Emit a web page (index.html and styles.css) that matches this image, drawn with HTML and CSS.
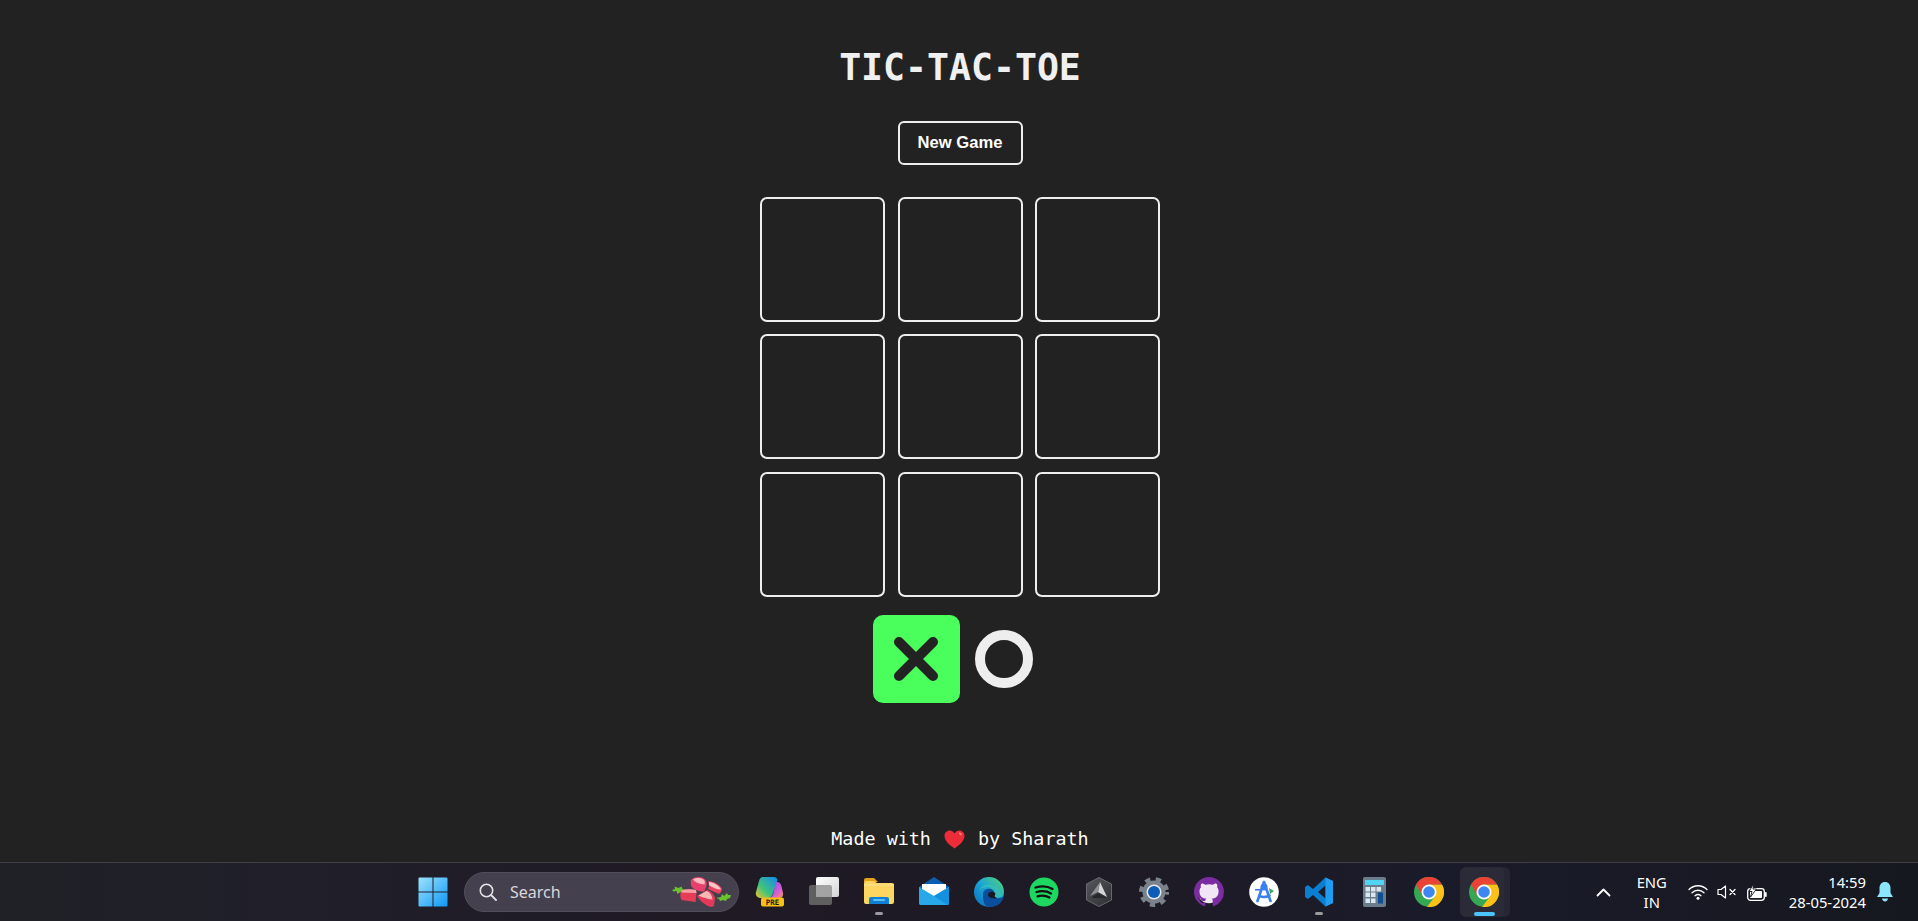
FILE: index.html
```html
<!DOCTYPE html>
<html lang="en">
<head>
<meta charset="utf-8">
<title>Tic-Tac-Toe</title>
<link rel="stylesheet" href="styles.css">
</head>
<body>
<main class="game">
  <h1 class="title">TIC-TAC-TOE</h1>
  <button class="new-game">New Game</button>
  <div class="board">
    <div class="cell"></div><div class="cell"></div><div class="cell"></div>
    <div class="cell"></div><div class="cell"></div><div class="cell"></div>
    <div class="cell"></div><div class="cell"></div><div class="cell"></div>
  </div>
  <div class="turns">
    <div class="turn turn-active">
      <svg class="mark" viewBox="0 0 44 44"><path d="M5 5 39 39M39 5 5 39" fill="none" stroke="#222" stroke-width="10" stroke-linecap="round"/></svg>
    </div>
    <div class="turn"><div class="ring"></div></div>
  </div>
  <footer class="credit">
    <span>Made with</span>
    <svg class="heart" viewBox="0 0 21 19"><path d="M10.500 18.500C4 14 .5 10.200.5 6 .5 2.800 2.900.5 5.700.5 7.700.5 9.500 1.600 10.500 3.400 11.500 1.600 13.300.5 15.300.5c2.800 0 5.200 2.300 5.200 5.500 0 4.200-3.500 8-10 12.500Z" fill="#ee2b38"/><path d="M15 2.500c1.600.1 2.800 1.200 3 2.800-1.600.2-3-1-3-2.800z" fill="#ff8a90"/></svg>
    <span>by Sharath</span>
  </footer>
</main>

<div class="taskbar">
  <div></div>
  <div class="apps">
    <div class="app">
      <svg class="icon" viewBox="0 0 30 30"><defs><linearGradient id="win" x1="0" y1="0" x2="1" y2="1"><stop offset="0" stop-color="#9be3fd"/><stop offset="1" stop-color="#0f97f5"/></linearGradient></defs><path d="M.5 1.500a1 1 0 0 1 1-1h13v14H.5zM15.500.5h13a1 1 0 0 1 1 1v13h-14zM.5 15.500h14v14h-13a1 1 0 0 1-1-1zM15.500 15.500h14v13a1 1 0 0 1-1 1h-13z" fill="url(#win)"/></svg>
    </div>
    <div class="search">
      <svg class="search-icon" viewBox="0 0 18 18"><circle cx="7.500" cy="7.500" r="6.200" fill="none" stroke="#e4e2e6" stroke-width="1.600"/><path d="M12 12l5 5" stroke="#e4e2e6" stroke-width="1.800" stroke-linecap="round"/></svg>
      <span class="search-text">Search</span>
      <svg class="rhubarb" viewBox="0 0 60 30">
        <path d="M0 13l3-1-.5-2.500 4 1.500 3-1.500 1 2.500 5 1-1 3-6-1-3 2-1-3-3 .5z" fill="#6cc22c"/>
        <path d="M44 21l5-1 1-3 2 2 3-3 1 2 3 0-1 3-3 1-1 2-3-1-3 1-1-2z" fill="#6cc22c"/>
        <path d="M19 3c3-3.500 10-4 14-.5 2 2 2 5 1 8l-2 4c-5 0-11-2-13-6-.5-2 0-4 0-5.500z" fill="#e7406d"/>
        <path d="M21 2.500c3-2 8-2 11 .5 1 1 1 3 .5 4.500C28 7 23 5.500 21 2.500z" fill="#fbb9c0"/>
        <path d="M36 4c6 0 12 4 14 8l-1 3-2 2-11-5c1.500-2 1-5 0-8z" fill="#ea4463"/>
        <path d="M37 5c5 .5 10 3.500 12 7.500-4 0-9-2-12-4.500z" fill="#fcc6c4"/>
        <path d="M9 14c5-2 10-2 15-1l.5 3-1 9-14-2c-1.500-3-1.500-6-.5-9z" fill="#e63c58"/>
        <path d="M9.500 13.500c5-1.500 10-1.500 14.500-.5l.5 3-15.200-.5z" fill="#f8a2a8"/>
        <path d="M25 19l10-6c4 1 7 4 8 8l-1 8-3 1c-6-2-11-6-14-11z" fill="#e33a5c"/>
        <path d="M26.500 18.500l8-4.500c3 1 5.500 4 6 8.500-5-.5-10-2-14-4z" fill="#fbb9b6"/>
      </svg>
    </div>
    <div class="app">
      <svg class="icon" viewBox="0 0 30 30"><defs><linearGradient id="cop1" x1="0" y1="1" x2="1" y2="0"><stop offset="0" stop-color="#f2c12e"/><stop offset=".4" stop-color="#3cc47c"/><stop offset="1" stop-color="#1688f2"/></linearGradient><linearGradient id="cop2" x1="0" y1="0" x2="1" y2="1"><stop offset="0" stop-color="#6a56f2"/><stop offset=".6" stop-color="#d65ad8"/><stop offset="1" stop-color="#f29a5a"/></linearGradient></defs>
        <path d="M9 0h11c2 0 3 1 3.500 3L19 16c-1 3-2 5-5 5H6c-3 0-5-3-4-6L5 4c.7-2.500 2-4 4-4z" fill="url(#cop1)"/>
        <path d="M22 5c4 0 5 2 5.500 4.500L29 16c.6 3-1 5-4 5H15c2 0 3.500-2 4.200-4.500z" fill="url(#cop2)"/>
        <rect x="7" y="20.500" width="23" height="9" rx="2" fill="#f8bf18"/>
        <text x="18.500" y="28" class="pre">PRE</text>
      </svg>
    </div>
    <div class="app">
      <svg class="icon" viewBox="0 0 30 30"><defs><linearGradient id="tv" x1="0" y1="0" x2="1" y2="1"><stop offset="0" stop-color="#fff"/><stop offset="1" stop-color="#d4d4d4"/></linearGradient></defs><rect x="0" y="8" width="23" height="20" rx="2" fill="#5f5f5f"/><rect x="7" y="0" width="23" height="20" rx="2" fill="url(#tv)"/><path d="M7 8h14a2 2 0 0 1 2 2v10H9a2 2 0 0 1-2-2z" fill="#a2a2a2"/></svg>
    </div>
    <div class="app">
      <svg class="icon" viewBox="0 0 30 30"><path d="M0 3a2 2 0 0 1 2-2h8l4 4H0z" fill="#e3a21a"/><path d="M0 25V6a2 2 0 0 1 2-2h8l3 2h15a2 2 0 0 1 2 2v17a2 2 0 0 1-2 2H2a2 2 0 0 1-2-2z" fill="#fcd660"/><path d="M0 7h30v2H0z" fill="#fbdd7c"/><path d="M5 22a2 2 0 0 1 2-2h16a2 2 0 0 1 2 2v5H5z" fill="#0f80d6"/><rect x="9" y="22" width="12" height="2" rx="1" fill="#5cc0f5"/></svg>
      <span class="dot"></span>
    </div>
    <div class="app">
      <svg class="icon" viewBox="0 0 30 30"><path d="M0 10 15 0l15 10v16a2 2 0 0 1-2 2H2a2 2 0 0 1-2-2z" fill="#0c5fb0"/><path d="M3 7h24v6L15 20 3 13z" fill="#fff"/><path d="M0 10l15 9 15-9v16a2 2 0 0 1-2 2H2a2 2 0 0 1-2-2z" fill="#28a8ea"/><path d="M15 19l15-9v16a2 2 0 0 1-2 2z" fill="#1490df"/></svg>
    </div>
    <div class="app">
      <svg class="icon" viewBox="0 0 30 30"><defs><linearGradient id="edge" x1="0" y1="1" x2="1" y2="0"><stop offset="0" stop-color="#0a6cbc"/><stop offset=".5" stop-color="#19a5d8"/><stop offset="1" stop-color="#58d66c"/></linearGradient></defs><circle cx="15" cy="15" r="15" fill="url(#edge)"/><path d="M5 16C5 9 12 6 18 8c5 1 9 5 9 10 0 2-3 3-6 2-2-1-2-3-1-5 0-3-3-5-6-5-4 0-9 2-9 6z" fill="#37c3b0" opacity=".7"/><path d="M9 17c0-4 4-6 8-5 3 1 4 3 3 6-1 2 1 4 5 3 2 0 4-1 5-3-1 7-6 12-14 12C9 30 9 22 9 17z" fill="#0b4f9c"/><path d="M14 18c0-3 3-4 5-3 2 0 3 2 2 3-1 2 1 3 3 3-4 1-10 0-10-3z" fill="#1c1820"/></svg>
    </div>
    <div class="app">
      <svg class="icon" viewBox="0 0 30 30"><circle cx="15" cy="15" r="14.500" fill="#1ed760"/><path d="M6.500 10.500c6-1.800 12.500-1.200 17 1.500M7.500 15c5-1.400 10.500-.9 14.500 1.400M8.500 19.300c4-1 8.500-.7 12 1.200" fill="none" stroke="#111" stroke-width="2.300" stroke-linecap="round"/></svg>
    </div>
    <div class="app">
      <svg class="icon" viewBox="0 0 30 30"><defs><linearGradient id="hexa" x1="0" y1="0" x2="1" y2="1"><stop offset="0" stop-color="#55585c"/><stop offset="1" stop-color="#2b2d31"/></linearGradient></defs><path d="M15 .5l12.500 6.500v16L15 29.500 2.500 23V7z" fill="url(#hexa)" stroke="#77797d" stroke-width=".8"/><path d="M16 5l7 15-9-5z" fill="#d3d5d7"/><path d="M16 5 6 19l8-4z" fill="#8e9094"/><path d="M7 21l7-5 9 5z" fill="#26272b"/></svg>
    </div>
    <div class="app">
      <svg class="icon" viewBox="0 0 30 30"><circle cx="15" cy="15" r="11.500" fill="#7a838b"/><circle cx="15" cy="15" r="13" fill="none" stroke="#7a838b" stroke-width="4" stroke-dasharray="5.400 5.490" stroke-dashoffset="2.700"/><circle cx="15" cy="15" r="7.500" fill="#e6eaee"/><circle cx="15" cy="15" r="6" fill="#0f5cb8"/></svg>
    </div>
    <div class="app">
      <svg class="icon" viewBox="0 0 16 16"><circle cx="8" cy="8" r="6" fill="#f1e6f6"/><path fill-rule="evenodd" d="M8 0C3.580 0 0 3.580 0 8c0 3.540 2.290 6.530 5.470 7.590.4.070.55-.17.55-.38 0-.19-.01-.82-.01-1.490-2.010.37-2.530-.49-2.690-.94-.09-.23-.48-.94-.82-1.130-.28-.15-.68-.52-.01-.53.63-.01 1.080.58 1.230.82.72 1.210 1.870.87 2.330.66.070-.52.28-.87.51-1.070-1.780-.2-3.640-.89-3.640-3.950 0-.87.31-1.590.82-2.150-.08-.2-.36-1.020.08-2.120 0 0 .67-.21 2.200.82.64-.18 1.320-.27 2-.27.68 0 1.360.09 2 .27 1.530-1.040 2.200-.82 2.200-.82.44 1.100.16 1.920.08 2.120.51.56.82 1.270.82 2.150 0 3.070-1.870 3.750-3.650 3.950.29.25.54.73.54 1.480 0 1.070-.01 1.930-.01 2.200 0 .21.15.46.55.38A8.013 8.013 0 0 0 16 8c0-4.420-3.580-8-8-8z" fill="#7a2ca0"/></svg>
    </div>
    <div class="app">
      <svg class="icon" viewBox="0 0 30 30"><circle cx="15" cy="15" r="14.800" fill="#fff"/><path d="M15 5l-6.500 19M15 5l6.500 19M10 19c4 1.500 7 1.500 10.500-.5" fill="none" stroke="#3a7ef0" stroke-width="2.600" stroke-linecap="round"/><circle cx="15" cy="10" r="3.500" fill="#3a7ef0"/><rect x="6" y="12" width="5" height="1.600" fill="#3a7ef0"/><path d="M20 11l5 3-4 3z" fill="#3aa95a"/></svg>
    </div>
    <div class="app">
      <svg class="icon" viewBox="0 0 30 30"><path fill-rule="evenodd" d="M21.500.5 29 4v22l-7.500 3.500L9 18l-5 4-3-2v-10l3-2 5 4zM21.500 8.500 14 15l7.500 6.500z" fill="#0a7fd0"/><path fill-rule="evenodd" d="M21.500.5 29 4v22l-7.500 3.500z" fill="#1e9cf0"/></svg>
      <span class="dot"></span>
    </div>
    <div class="app">
      <svg class="icon calc" viewBox="0 0 23 30"><rect width="23" height="30" rx="2" fill="#6b7d8c"/><rect x="2" y="3" width="19" height="5" fill="#4fd4f4"/><rect x="2.500" y="10" width="4.500" height="4.500" fill="#dce6ee"/><rect x="8" y="10" width="4.500" height="4.500" fill="#dce6ee"/><rect x="13.500" y="10" width="4.500" height="4.500" fill="#dce6ee"/><rect x="2.500" y="15.500" width="4.500" height="4.500" fill="#dce6ee"/><rect x="8" y="15.500" width="4.500" height="4.500" fill="#dce6ee"/><rect x="2.500" y="21.500" width="4.500" height="4.500" fill="#dce6ee"/><rect x="8" y="21.500" width="4.500" height="4.500" fill="#dce6ee"/><rect x="15" y="15.500" width="5" height="11" fill="#0f4f94"/></svg>
    </div>
    <div class="app">
      <svg class="icon" viewBox="0 0 30 30"><circle cx="15" cy="15" r="15" fill="#34a853"/><path d="M28 7.500A15 15 0 0 1 13 29.900L21.500 18.750 15 7.500z" fill="#fbc116"/><path d="M2 7.500A15 15 0 0 1 28 7.500H15L8.500 18.750z" fill="#ea4335"/><circle cx="15" cy="15" r="7.500" fill="#fff"/><circle cx="15" cy="15" r="5.800" fill="#3f86f0"/></svg>
    </div>
    <div class="app app-open">
      <svg class="icon" viewBox="0 0 30 30"><circle cx="15" cy="15" r="15" fill="#34a853"/><path d="M28 7.500A15 15 0 0 1 13 29.900L21.500 18.750 15 7.500z" fill="#fbc116"/><path d="M2 7.500A15 15 0 0 1 28 7.500H15L8.500 18.750z" fill="#ea4335"/><circle cx="15" cy="15" r="7.500" fill="#fff"/><circle cx="15" cy="15" r="5.800" fill="#3f86f0"/></svg>
      <span class="active-bar"></span>
    </div>
  </div>
  <div class="tray">
    <svg class="chevron" viewBox="0 0 15 9"><path d="M1.500 7.500l6-6 6 6" fill="none" stroke="#fff" stroke-width="1.800" stroke-linecap="round" stroke-linejoin="round"/></svg>
    <div class="lang"><span>ENG</span><span>IN</span></div>
    <div class="status">
      <svg class="wifi" viewBox="0 0 20 16"><path d="M1 5.500c5-5 13-5 18 0M4 8.700c3.500-3.300 8.500-3.300 12 0M7 11.700c1.800-1.400 4.200-1.400 6 0" fill="none" stroke="#fff" stroke-width="1.300" stroke-linecap="round"/><circle cx="10" cy="14.200" r="1.500" fill="#fff"/></svg>
      <svg class="speaker" viewBox="0 0 20 14"><path d="M1 4.500h3L8.500 1v12L4 9.500H1z" fill="none" stroke="#fff" stroke-width="1.200" stroke-linejoin="round"/><path d="M13 4.500l5 5M18 4.500l-5 5" stroke="#fff" stroke-width="1.300" stroke-linecap="round"/></svg>
      <svg class="battery" viewBox="0 0 20 17"><rect x=".7" y="4.700" width="16.600" height="11.600" rx="2.800" fill="none" stroke="#fff" stroke-width="1.300"/><rect x="3" y="7" width="12" height="7" rx="1" fill="#fff"/><rect x="18" y="8" width="1.700" height="5" rx=".8" fill="#fff"/><path d="M6.500 0 2 7.500h3l-1.500 5.500 6-8H6z" fill="#fff" stroke="#17181f" stroke-width=".9"/></svg>
    </div>
    <div class="clock"><span>14:59</span><span>28-05-2024</span></div>
    <svg class="bell" viewBox="0 0 16 20"><path d="M8 0c3.500 0 5.500 2.700 5.500 6v5l2.500 4H0l2.500-4V6C2.500 2.700 4.500 0 8 0z" fill="#8ce6fb"/><path d="M5 16.500h6C10.700 18.500 9.500 19.500 8 19.500S5.300 18.500 5 16.500z" fill="#8ce6fb"/></svg>
  </div>
</div>
</body>
</html>
```
FILE: styles.css
```css
* { box-sizing: border-box; }
html, body { margin: 0; height: 100%; }
body {
  display: flex;
  flex-direction: column;
  background: #222222;
  color: #eeeeee;
  overflow: hidden;
}
.game {
  flex: 1;
  min-height: 0;
  display: flex;
  flex-direction: column;
  align-items: center;
  padding-left: 2px;
}
.title {
  margin: 49px 0 35px;
  font: bold 36.500px/37px "DejaVu Sans Mono", monospace;
  color: #f0f0f0;
}
.new-game {
  width: 125px;
  height: 44px;
  border: 2px solid #eeeeee;
  border-radius: 6px;
  background: transparent;
  color: #ffffff;
  font: bold 16.600px "Liberation Sans", sans-serif;
  padding: 0;
}
.board {
  display: grid;
  grid-template-columns: repeat(3, 125px);
  grid-auto-rows: 125px;
  gap: 12.500px;
  margin-top: 31.900px;
}
.cell {
  border: 2px solid #eeeeee;
  border-radius: 7px;
}
.turns {
  display: flex;
  margin-top: 18.100px;
}
.turn {
  width: 87.500px;
  height: 88px;
  border-radius: 10px;
  display: flex;
  align-items: center;
  justify-content: center;
}
.turn-active { background: #4aff5b; }
.mark { width: 44px; height: 44px; }
.ring {
  width: 58px;
  height: 58px;
  border: 10px solid #eeeeee;
  border-radius: 50%;
}
.credit {
  margin-top: auto;
  margin-bottom: 12px;
  display: flex;
  align-items: center;
  gap: 13px;
  font: 18.400px/22px "DejaVu Sans Mono", monospace;
  color: #ffffff;
}
.heart { width: 21px; height: 19px; }
.taskbar {
  flex: none;
  height: 59px;
  display: grid;
  grid-template-columns: 1fr auto 1fr;
  align-items: center;
  border-top: 1px solid #404044;
  background: linear-gradient(90deg, #1f2126 0%, #201f2a 15%, #1f1a24 35%, #1e1b26 60%, #1a1b2a 75%, #16181f 100%);
}
.apps {
  display: flex;
  align-items: center;
  height: 100%;
  padding-right: 1.500px;
}
.app {
  position: relative;
  width: 55px;
  height: 100%;
  display: flex;
  align-items: center;
  justify-content: center;
}
.icon { width: 30px; height: 30px; }
.calc { width: 23px; }
.dot {
  position: absolute;
  left: 50%;
  bottom: 6px;
  width: 8px;
  height: 3px;
  margin-left: -4px;
  border-radius: 2px;
  background: #9a9a9f;
}
.app-open::before {
  content: "";
  position: absolute;
  left: 3px;
  right: 8px;
  top: 4px;
  bottom: 4px;
  border-radius: 6px;
  background: #2a2b36;
  box-shadow: 6px 0 0 #262733;
}
.app-open .icon { position: relative; }
.active-bar {
  position: absolute;
  left: 17px;
  bottom: 5px;
  width: 21px;
  height: 4px;
  border-radius: 2px;
  background: #4cc2ff;
}
.search {
  width: 275px;
  height: 40px;
  margin: 0 2.500px 0 4px;
  border-radius: 20px;
  background: #45404d;
  border: 1px solid #524e58;
  display: flex;
  align-items: center;
  padding-left: 14px;
}
.search-icon { width: 18px; height: 18px; }
.search-text {
  margin-left: 13px;
  font: 16px "Noto Sans", sans-serif;
  color: #d8d6da;
}
.rhubarb {
  width: 60px;
  height: 30px;
  margin-left: auto;
  margin-right: 6px;
}
.pre {
  font: bold 7.500px "DejaVu Sans Mono", monospace;
  text-anchor: middle;
  fill: #1a1a1a;
}
.tray {
  justify-self: end;
  display: flex;
  align-items: center;
  padding-right: 25px;
  color: #ffffff;
  font: 14.800px/20px "Noto Sans", sans-serif;
}
.chevron { width: 15px; height: 9px; margin-right: 26px; }
.lang, .clock { display: flex; flex-direction: column; }
.lang { align-items: center; width: 30px; margin-right: 21px; }
.status { display: flex; align-items: center; gap: 9.500px; margin-right: 22px; }
.wifi { width: 20px; height: 16px; }
.speaker { width: 20px; height: 14px; }
.battery { width: 20px; height: 17px; }
.clock { align-items: flex-end; margin-right: 11px; }
.bell { width: 16px; height: 20px; }
```
